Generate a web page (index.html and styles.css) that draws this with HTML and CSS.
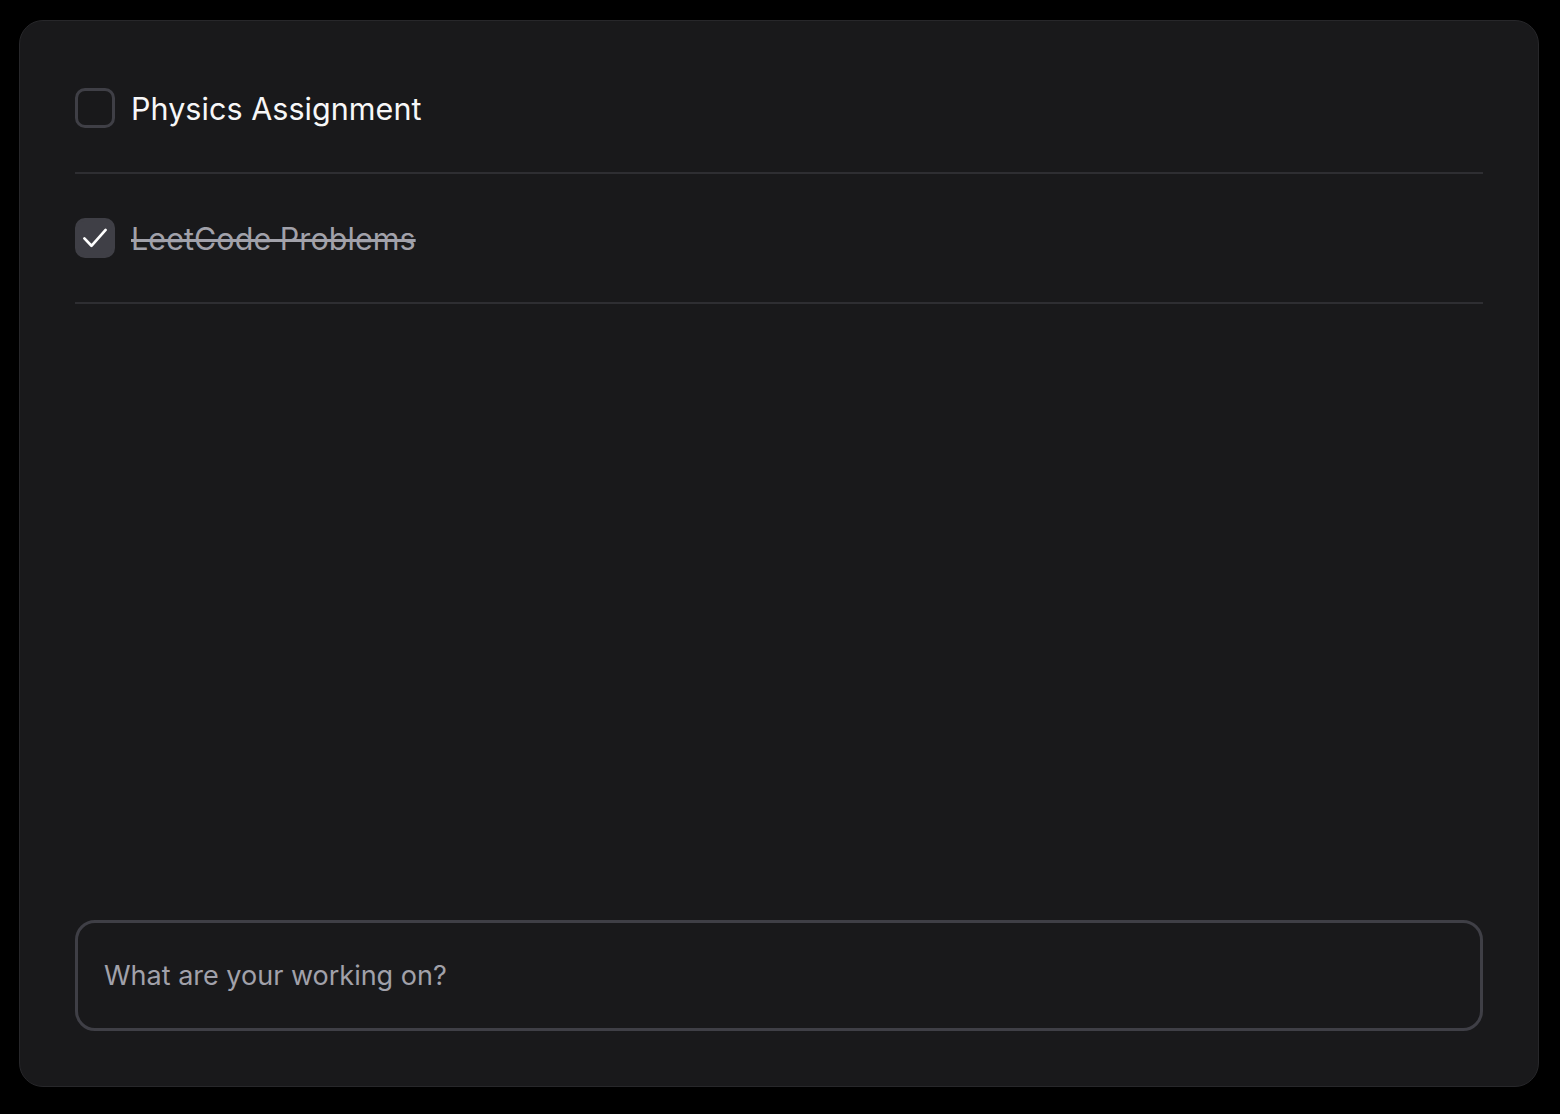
FILE: index.html
```html
<!DOCTYPE html>
<html lang="en">
<head>
<meta charset="utf-8">
<title>Tasks</title>
<link rel="stylesheet" href="styles.css">
</head>
<body>
<main class="card">
  <ul class="tasks">
    <li class="task">
      <span class="box"></span>
      <span class="label">Physics Assignment</span>
    </li>
    <li class="task done">
      <span class="box checked">
        <svg width="34" height="34" viewBox="0 0 24 24" fill="none" stroke="#fff" stroke-width="1.9" stroke-linecap="round" stroke-linejoin="round"><path d="M4.5 12.3l5 5.2L19.5 6.3"/></svg>
      </span>
      <span class="label">LeetCode Problems</span>
    </li>
  </ul>
  <div class="composer">
    <input class="field" type="text" placeholder="What are your working on?">
  </div>
</main>
</body>
</html>
```
FILE: styles.css
```css
* { box-sizing: border-box; }
html, body { margin: 0; height: 100%; }
body {
  background: #000;
  padding: 20px 21px 27px 19px;
  font-family: Inter, "Noto Sans", sans-serif;
}
.card {
  height: 100%;
  background: #19191b;
  border: 1px solid #27272a;
  border-radius: 24px;
  padding: 23px 55px 55px 55px;
  display: flex;
  flex-direction: column;
}
.tasks {
  list-style: none;
  margin: 0;
  padding: 0;
  flex: 1;
}
.task {
  display: flex;
  align-items: center;
  gap: 16px;
  padding: 44px 0;
  border-bottom: 2px solid #2e2e32;
}
.box {
  width: 40px;
  height: 40px;
  border: 3px solid #3f3f46;
  border-radius: 10px;
  display: flex;
  align-items: center;
  justify-content: center;
  flex: none;
}
.box.checked {
  background: #3f3f46;
}
.box svg { flex: none; }
.label {
  font-size: 30.5px;
  color: #f7f7f8;
  line-height: 38px;
  padding-top: 2px;
  letter-spacing: 0.05px;
}
.done .label {
  color: #a1a1aa;
  text-decoration: line-through;
  text-decoration-thickness: 3px;
}
.composer { display: flex; }
.field {
  width: 100%;
  height: 111px;
  background: transparent;
  border: 3px solid #3f3f46;
  border-radius: 20px;
  padding: 0 26px;
  font-family: Inter, "Noto Sans", sans-serif;
  font-size: 27px;
  color: #f4f4f5;
  outline: none;
}
.field::placeholder { color: #a1a1aa; }
```
